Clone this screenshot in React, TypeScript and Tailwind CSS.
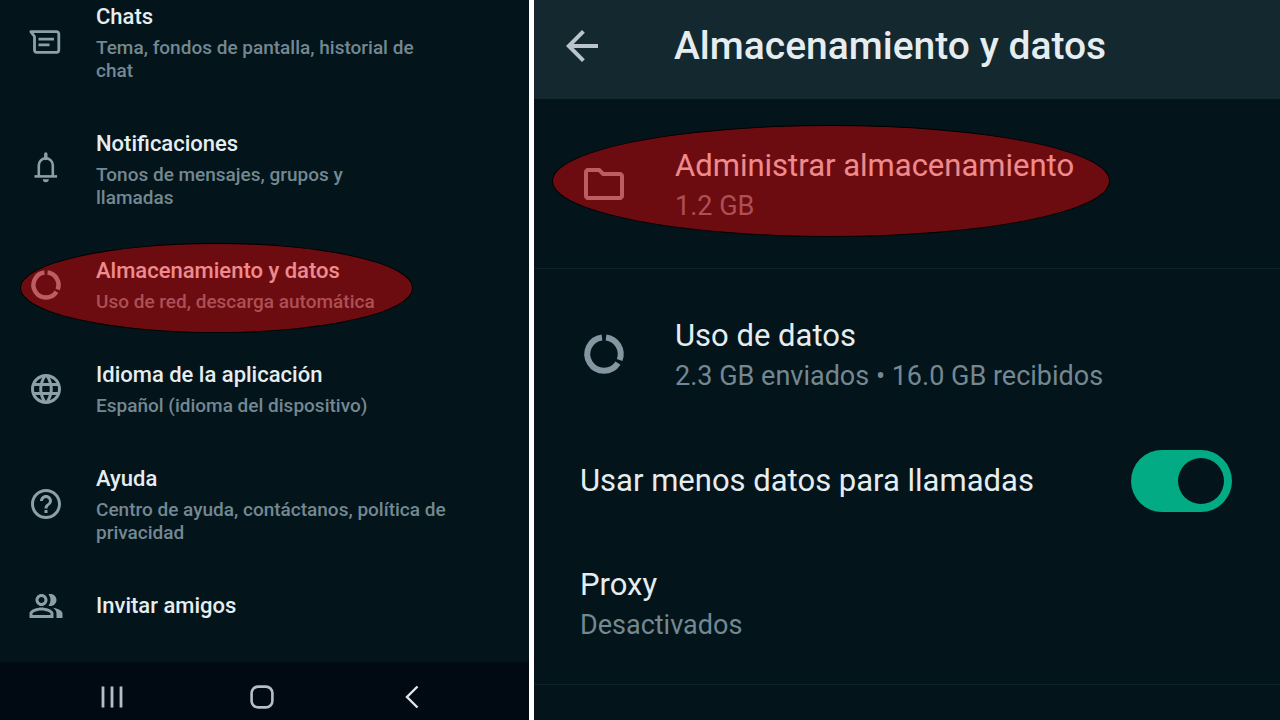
import React, { useState } from "react";
import {
  MdArrowBack,
  MdHelpOutline,
  MdLanguage,
  MdOutlineFolder,
  MdOutlinePeopleAlt,
} from "react-icons/md";

const ChatIcon = () => (
  <svg
    viewBox="0 0 36 36"
    className="w-9 h-9"
    fill="none"
    stroke="currentColor"
    strokeWidth="2.8"
    strokeLinejoin="round"
  >
    <path d="M2.8 7.6h25.7a2.3 2.3 0 0 1 2.3 2.3v16.2a2.3 2.3 0 0 1-2.3 2.3H8.8a2.3 2.3 0 0 1-2.3-2.3V12.5z" />
    <path d="M10.5 15.2h15.5M10.500 20.8h11" />
  </svg>
);

const BellIcon = () => (
  <svg
    viewBox="0 0 36 36"
    className="w-9 h-9"
    fill="none"
    stroke="currentColor"
    strokeWidth="2.6"
  >
    <path d="M10.8 25.5V14.3a7 7 0 0 1 14 0v11.2" />
    <path d="M6.5 25.4h22.600" />
    <path d="M17.8 3v4.500" strokeWidth="3.4" strokeLinecap="round" />
    <path d="M14.8 28.200h6a3 3 0 0 1-6 0z" fill="currentColor" stroke="none" />
  </svg>
);

const DataIcon = ({ className }: { className: string }) => (
  <svg
    viewBox="0 0 48 48"
    className={className}
    fill="none"
    stroke="currentColor"
    strokeWidth="6"
  >
    <path d="M26.04 7.42A16.7 16.7 0 0 1 39.59 29.98" />
    <path d="M38 33.1A16.7 16.7 0 1 1 21.96 7.42" />
  </svg>
);

const settings = [
  {
    title: "Chats",
    text: "Tema, fondos de pantalla, historial de\nchat",
    icon: <ChatIcon />,
  },
  {
    title: "Notificaciones",
    text: "Tonos de mensajes, grupos y\nllamadas",
    icon: <BellIcon />,
  },
  {
    title: "Almacenamiento y datos",
    text: "Uso de red, descarga automática",
    icon: <DataIcon className="w-9 h-9" />,
    marked: true,
  },
  {
    title: "Idioma de la aplicación",
    text: "Español (idioma del dispositivo)",
    icon: <MdLanguage className="w-9 h-9" />,
  },
  {
    title: "Ayuda",
    text: "Centro de ayuda, contáctanos, política de\nprivacidad",
    icon: <MdHelpOutline className="w-9 h-9" />,
  },
  {
    title: "Invitar amigos",
    icon: <MdOutlinePeopleAlt className="w-9 h-9" />,
  },
];

const SettingsPanel = () => {
  return (
    <section className="flex flex-col bg-[#03141b]">
      <div className="flex flex-col gap-[47px] pt-0.5 pb-10">
        {settings.map((item) => (
          <button
            key={item.title}
            type="button"
            className="relative flex items-center gap-8 pl-7 pr-8 text-left font-medium"
          >
            <span className="flex h-7 w-9 shrink-0 items-center text-[#8d9fa8]">
              {item.icon}
            </span>
            <span className="block">
              <span className="block text-[22px] leading-[30px] text-[#e6edf0]">
                {item.title}
              </span>
              {item.text && (
                <span className="mt-1 block whitespace-pre-line text-[19px] leading-[23px] text-[#748892]">
                  {item.text}
                </span>
              )}
            </span>
            {item.marked && (
              <span className="absolute left-5 -top-[13px] h-[90px] w-[393px] rounded-[50%] border border-black bg-[#ff0000]/42" />
            )}
          </button>
        ))}
      </div>
      <nav className="mt-auto grid h-[58px] grid-cols-3 items-center justify-items-center bg-[#010a13] pl-[37px] pr-[42px] pt-3 text-[#b4c0c8]">
        <button type="button" aria-label="Recientes">
          <svg viewBox="0 0 24 24" className="w-6 h-6" stroke="currentColor" strokeWidth="2.8">
            <path d="M3 1.5v21M12 1.5v21M21 1.5v21" />
          </svg>
        </button>
        <button type="button" aria-label="Inicio">
          <svg viewBox="0 0 24 24" className="w-6 h-6" fill="none" stroke="currentColor" strokeWidth="2.6">
            <rect x="1.6" y="1.6" width="20.8" height="20.8" rx="6.5" />
          </svg>
        </button>
        <button type="button" aria-label="Atrás">
          <svg viewBox="0 0 24 24" className="w-6 h-6" fill="none" stroke="#dfe6ea" strokeWidth="2.4">
            <path d="M17.5 1.5L7 12l10.5 10.5" />
          </svg>
        </button>
      </nav>
    </section>
  );
};

const StoragePanel = () => {
  const [lessData, setLessData] = useState(true);

  return (
    <section className="flex flex-col bg-[#03141b] text-[#e6edf0]">
      <header className="flex h-[99px] items-center gap-[68px] bg-[#14282f] pb-2 pl-6">
        <button type="button" aria-label="Volver" className="text-[#b9c5cb]">
          <MdArrowBack className="w-12 h-12" />
        </button>
        <h1 className="text-[39px] font-medium leading-[44px]">
          Almacenamiento y datos
        </h1>
      </header>

      <div className="border-b border-[#0d2129] pt-[45px] pb-11">
        <button
          type="button"
          className="relative flex w-full items-center gap-[47px] pl-[46px] text-left"
        >
          <MdOutlineFolder className="w-12 h-12 text-[#8d9fa8]" />
          <span className="block">
            <span className="block text-[31px] leading-[44px]">
              Administrar almacenamiento
            </span>
            <span className="block text-[27px] leading-9 text-[#748892]">
              1.2 GB
            </span>
          </span>
          <span className="absolute left-[18px] -top-[19px] h-28 w-[558px] rounded-[50%] border border-black bg-[#ff0000]/42" />
        </button>
      </div>

      <div className="border-b border-[#0d2129] pt-[45px] pb-[41px]">
        <button
          type="button"
          className="flex w-full items-center gap-[47px] pl-[46px] text-left"
        >
          <DataIcon className="w-12 h-12 text-[#8496a0]" />
          <span className="block">
            <span className="block text-[31px] leading-[44px]">
              Uso de datos
            </span>
            <span className="block text-[27px] leading-9 text-[#748892]">
              2.3 GB enviados • 16.0 GB recibidos
            </span>
          </span>
        </button>

        <label
          htmlFor="less-data"
          className="mt-14 flex cursor-pointer items-center justify-between pl-[46px] pr-12"
        >
          <span className="text-[31px] leading-[44px]">
            Usar menos datos para llamadas
          </span>
          <input
            id="less-data"
            type="checkbox"
            checked={lessData}
            onChange={(e) => setLessData(e.target.checked)}
            className="flex h-[62px] w-[101px] cursor-pointer appearance-none items-center rounded-full bg-[#3b4a54] px-2 before:h-[46px] before:w-[46px] before:rounded-full before:bg-[#03141b] checked:justify-end checked:bg-[#02ab84]"
          />
        </label>

        <button type="button" className="mt-[51px] block w-full pl-[46px] text-left">
          <span className="block text-[31px] leading-[44px]">Proxy</span>
          <span className="block text-[27px] leading-9 text-[#748892]">
            Desactivados
          </span>
        </button>
      </div>
    </section>
  );
};

const App = () => {
  return (
    <main className="grid min-h-screen grid-cols-[529fr_746fr] gap-[5px] bg-white font-[Roboto,sans-serif]">
      <SettingsPanel />
      <StoragePanel />
    </main>
  );
};

export default App;
